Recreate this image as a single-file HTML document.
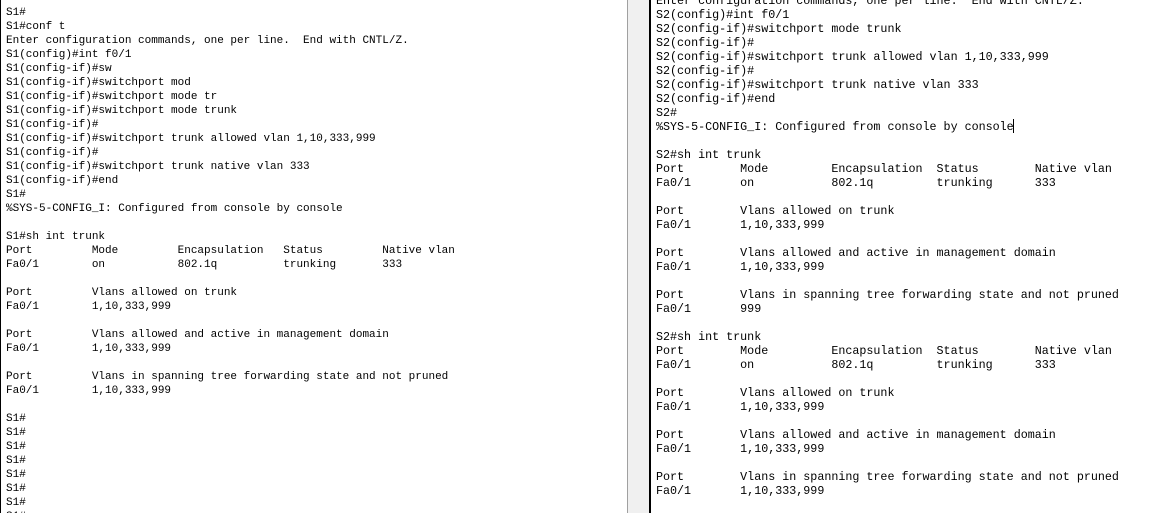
<!DOCTYPE html>
<html><head><style>
body{margin:0;width:1168px;height:513px;overflow:hidden;background:#fff;position:relative}
.p{position:absolute;top:0;bottom:0;background:#fff;overflow:hidden}
pre{margin:0;position:absolute;font-family:"Liberation Mono",monospace;font-size:11px;line-height:14px;color:#000;white-space:pre}
</style></head><body>
<div class="p" style="left:0;width:627px;border-left:1px solid #000">
<pre style="left:5px;top:6px">S1#
S1#conf t
Enter configuration commands, one per line.  End with CNTL/Z.
S1(config)#int f0/1
S1(config-if)#sw
S1(config-if)#switchport mod
S1(config-if)#switchport mode tr
S1(config-if)#switchport mode trunk
S1(config-if)#
S1(config-if)#switchport trunk allowed vlan 1,10,333,999
S1(config-if)#
S1(config-if)#switchport trunk native vlan 333
S1(config-if)#end
S1#
%SYS-5-CONFIG_I: Configured from console by console

S1#sh int trunk
Port         Mode         Encapsulation   Status         Native vlan
Fa0/1        on           802.1q          trunking       333

Port         Vlans allowed on trunk
Fa0/1        1,10,333,999

Port         Vlans allowed and active in management domain
Fa0/1        1,10,333,999

Port         Vlans in spanning tree forwarding state and not pruned
Fa0/1        1,10,333,999

S1#
S1#
S1#
S1#
S1#
S1#
S1#
S1#</pre>
</div>
<div style="position:absolute;left:627px;top:0;bottom:0;width:1px;background:#a0a0a0"></div>
<div style="position:absolute;left:628px;top:0;bottom:0;width:21px;background:#f0f0f0"></div>
<div style="position:absolute;left:649px;top:0;bottom:0;width:2px;background:#000"></div>
<div class="p" style="left:651px;right:0">
<pre style="left:5px;top:-6px;font-size:11.7px">Enter configuration commands, one per line.  End with CNTL/Z.
S2(config)#int f0/1
S2(config-if)#switchport mode trunk
S2(config-if)#
S2(config-if)#switchport trunk allowed vlan 1,10,333,999
S2(config-if)#
S2(config-if)#switchport trunk native vlan 333
S2(config-if)#end
S2#
%SYS-5-CONFIG_I: Configured from console by console

S2#sh int trunk
Port        Mode         Encapsulation  Status        Native vlan
Fa0/1       on           802.1q         trunking      333

Port        Vlans allowed on trunk
Fa0/1       1,10,333,999

Port        Vlans allowed and active in management domain
Fa0/1       1,10,333,999

Port        Vlans in spanning tree forwarding state and not pruned
Fa0/1       999

S2#sh int trunk
Port        Mode         Encapsulation  Status        Native vlan
Fa0/1       on           802.1q         trunking      333

Port        Vlans allowed on trunk
Fa0/1       1,10,333,999

Port        Vlans allowed and active in management domain
Fa0/1       1,10,333,999

Port        Vlans in spanning tree forwarding state and not pruned
Fa0/1       1,10,333,999</pre>
<div style="position:absolute;left:362px;top:119px;width:1px;height:14px;background:#000"></div>
</div>
</body></html>
